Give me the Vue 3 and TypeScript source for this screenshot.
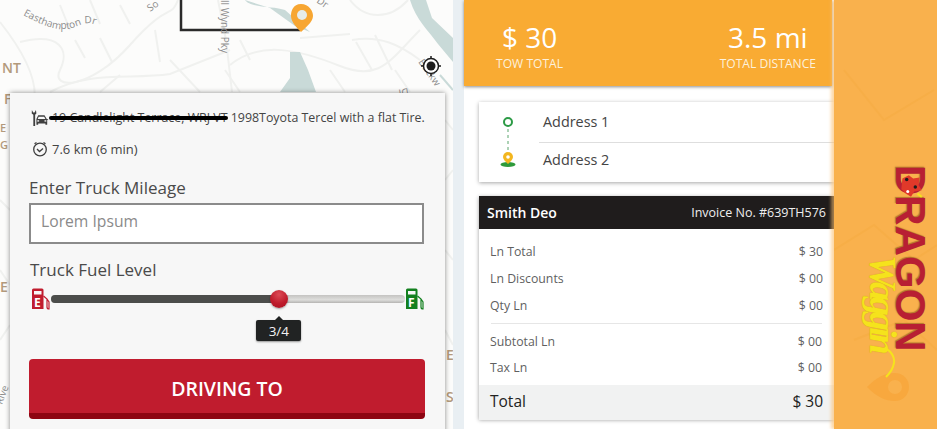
<template>
  <div class="screen">
    <section class="map-pane">
      <svg class="map-bg" width="453" height="429" viewBox="0 0 453 429">
        <defs>
          <path id="easthampton" d="M23 15 C40 24 60 34 75 27 S95 24 105 30" />
        </defs>
        <g fill="none" stroke="#f0f1ef" stroke-width="2">
          <path d="M0 22 C30 60 40 90 32 110" />
          <path d="M20 42 C60 32 70 50 60 70 S90 90 130 45 S170 20 178 0" />
          <path d="M50 92 C90 70 130 80 170 74 L230 50" />
          <path d="M155 30 L160 62 M75 40 L85 58 M100 38 L112 62 M60 5 L70 30 M90 0 L100 24 M120 5 L130 24" />
          <path d="M218 0 L226 40 L232 92" />
          <path d="M230 65 C260 40 300 50 340 66 S390 60 420 30" />
          <path d="M352 40 C380 35 400 45 420 60 M356 42 L372 70 M375 35 L392 70 M300 38 L350 34 M240 40 L250 60" />
          <path d="M330 70 L345 92 M395 70 L410 92 M225 70 L240 92 M170 60 L200 92 M120 75 L100 92" />
          <path d="M350 0 C365 20 390 20 408 0" />
          <path d="M445 120 L453 130 M445 250 L453 260 M0 270 L10 285" />
          <path d="M0 340 L10 325 M445 330 L453 345 M445 180 L453 170 M0 200 L10 210" />
        </g>
        <path d="M245 0 C250 8 275 6 285 10 L310 32 L295 26 L270 8 Z" fill="#c9dad8" />
        <path d="M290 52 L300 52 L308 70 L316 92 L280 92 L290 78 Z" fill="#c9dad8" />
        <path d="M410 0 C416 20 428 30 438 44 L453 62 L453 38 L432 18 L426 0 Z" fill="#c9dad8" />
        <path d="M440 75 L453 90" stroke="#c9dad8" stroke-width="2" />
        <path d="M181 0 V30 H300" fill="none" stroke="#2a2a2a" stroke-width="2.5" />
        <path d="M301 4 C293 4 291 11 291 16 C291 22 297 28 301 32 C305 28 313 22 313 16 C313 11 309 4 301 4 Z" fill="#f7a632" />
        <circle cx="302" cy="15" r="5" fill="#e6eceb" />
        <g font-family="'Open Sans', sans-serif" fill="#8c8c8c" font-size="10">
          <text><textPath href="#easthampton">Easthampton Dr</textPath></text>
          <text transform="translate(150 12) rotate(-35)">So</text>
          <text transform="translate(221 0) rotate(90)">ll Wynd Pky</text>
          <text transform="translate(316 2) rotate(35)">Dr</text>
          <text transform="translate(418 62) rotate(55)">Buckw</text>
          <text transform="translate(408 88) rotate(170)">Dr</text>
          <text transform="translate(2 405) rotate(-70)">Rive</text>
        </g>
        <g font-family="'Open Sans', sans-serif" font-weight="600" fill="#b39a7c" font-size="14">
          <text x="2" y="73">NT</text>
          <text x="4" y="104">F</text>
          <text x="0" y="292">E</text>
          <text x="446" y="360">E</text>
          <text x="446" y="402">S</text>
        </g>
        <g font-family="'Open Sans', sans-serif" font-weight="600" fill="#b39a7c" font-size="11">
          <text x="0" y="132">E</text>
          <text x="0" y="149">G</text>
        </g>
      </svg>
      <svg class="locate" width="22" height="22" viewBox="0 0 22 22">
        <circle cx="11" cy="11" r="7.5" fill="#fff" stroke="#1d1d1d" stroke-width="1.5" />
        <circle cx="11" cy="11" r="4.5" fill="#1d1d1d" />
        <path d="M11 1 V4 M11 18 V21 M1 11 H4 M18 11 H21" stroke="#1d1d1d" stroke-width="1.5" />
      </svg>

      <div class="panel">
        <div class="info-row">
          <svg class="truck-icon" width="18" height="18" viewBox="0 0 20 20" fill="#3f3f3f">
            <path d="M1 1 L2.5 4 L4 4 L5.5 1 L6 5 L4.6 6.5 V19 H2.6 V6.5 L0.8 5 Z" />
            <path d="M8 7 H15 L17.5 11 H19 V12 H18 V17.5 H16 V16 H8 V17.5 H6 V11 L8 7 Z M8.5 8.5 L7.5 11 H16 L14.6 8.5 Z" fill-rule="evenodd" />
            <rect x="7" y="12.5" width="2" height="1.5" fill="#f7f7f7" />
            <rect x="15" y="12.5" width="2" height="1.5" fill="#f7f7f7" />
          </svg>
          <p class="info-text small"><span class="scribbled">19 Candlelight Terrace, WRJ VT</span> 1998Toyota Tercel with a flat Tire.</p>
        </div>
        <div class="info-row second">
          <svg class="clock-icon" width="16" height="16" viewBox="0 0 16 16" fill="none" stroke="#3f3f3f" stroke-width="1.3">
            <circle cx="8" cy="8.5" r="6.3" />
            <path d="M5 8 L7.5 10.5 L11 7.5" />
            <path d="M2.5 2.8 L4.5 1.5 M13.5 2.8 L11.5 1.5" />
          </svg>
          <p class="info-text">7.6 km (6 min)</p>
        </div>

        <label class="field-label">Enter Truck Mileage</label>
        <div class="text-input">Lorem Ipsum</div>

        <div class="field-label fuel-label">Truck Fuel Level</div>
        <div class="fuel">
          <svg class="gauge" width="20" height="22" viewBox="0 0 20 22">
            <path d="M1 2 Q1 0.5 2.5 0.5 H11 Q12.5 0.5 12.5 2 V21 H1 Z" fill="#c01c2e" />
            <rect x="3" y="3" width="7.5" height="3.5" fill="#f7f7f7" />
            <text x="3" y="18.5" class="gauge-letter">E</text>
            <path d="M12.5 8 L16 11 V19 Q16 21 18 21 V14 L16 11" fill="none" stroke="#c01c2e" stroke-width="1.2" />
          </svg>
          <div class="track">
            <div class="track-fill" :style="{ width: fuelPercent + '%' }"></div>
            <div class="thumb" :style="{ left: fuelPercent + '%' }">
              <div class="fuel-tip">3/4</div>
            </div>
          </div>
          <svg class="gauge" width="20" height="22" viewBox="0 0 20 22">
            <path d="M1 2 Q1 0.5 2.5 0.5 H11 Q12.5 0.5 12.5 2 V21 H1 Z" fill="#13801f" />
            <rect x="3" y="3" width="7.5" height="3.5" fill="#f7f7f7" />
            <text x="3" y="18.5" class="gauge-letter">F</text>
            <path d="M12.5 8 L16 11 V19 Q16 21 18 21 V14 L16 11" fill="none" stroke="#13801f" stroke-width="1.2" />
          </svg>
        </div>

        <button class="drive-btn">DRIVING TO</button>
      </div>
    </section>

    <main class="summary">
      <header class="totals">
        <div class="total-block">
          <div class="total-value">$ 30</div>
          <div class="total-label">TOW TOTAL</div>
        </div>
        <div class="total-block">
          <div class="total-value">3.5 mi</div>
          <div class="total-label">TOTAL DISTANCE</div>
        </div>
      </header>

      <div class="address-card">
        <div class="route-icons">
          <svg width="30" height="60" viewBox="0 0 30 60">
            <circle cx="15" cy="7" r="4" fill="none" stroke="#2b9a45" stroke-width="2" />
            <path d="M15 14 V36" stroke="#5aa56d" stroke-width="1" stroke-dasharray="3 3" />
            <ellipse cx="15" cy="49.5" rx="7.5" ry="2.4" fill="#2f9a3b" />
            <path d="M15 49 C12 46 10 44 10 42 A5 5 0 0 1 20 42 C20 44 18 46 15 49 Z" fill="#f3b61f" />
            <circle cx="15" cy="42" r="1.8" fill="#fff" />
          </svg>
        </div>
        <div class="address-list">
          <div class="address">Address 1</div>
          <div class="address">Address 2</div>
        </div>
      </div>

      <div class="invoice">
        <div class="invoice-head">
          <span class="client">Smith Deo</span>
          <span class="invoice-no">Invoice No. #639TH576</span>
        </div>
        <div class="lines first">
          <div v-for="l in topLines" :key="l.name" class="line">
            <span>{{ l.name }}</span><span>{{ l.value }}</span>
          </div>
        </div>
        <div class="lines second">
          <div v-for="l in subLines" :key="l.name" class="line">
            <span>{{ l.name }}</span><span>{{ l.value }}</span>
          </div>
        </div>
        <div class="grand">
          <span>Total</span><span>$ 30</span>
        </div>
      </div>
    </main>

    <aside class="brand">
      <svg class="brand-bg" width="103" height="429" viewBox="0 0 103 429" fill="none">
        <g stroke="#f7ae47" stroke-width="2">
          <path d="M0 250 L40 225 L80 260 L103 245" />
          <path d="M10 70 L50 120 L100 90" />
          <path d="M20 340 L70 320 L103 350" />
        </g>
        <path d="M33 387 C43 377 51 373 61 373 A14 14 0 0 1 61 401 C51 401 43 397 33 387 Z" fill="#f8a83e" />
        <circle cx="61" cy="387" r="7" fill="#f9b14d" />
      </svg>
      <div class="logo">
        <span class="logo-main">DRAGON</span>
        <span class="logo-script">Waggin</span>
        <svg class="logo-tail" width="20" height="34" viewBox="0 0 20 34" fill="none">
          <path d="M4 0 C10 3 14 9 13 15 C12 21 9 25 5 29" stroke="#f5e31c" stroke-width="2" />
        </svg>
        <svg class="logo-crest" width="26" height="28" viewBox="0 0 24 26">
          <path d="M4 6 L10 3 L14 6 L20 5 L19 12 L22 17 L15 18 L12 23 L7 20 L3 16 Z" fill="#e0392a" />
          <circle cx="8" cy="7" r="1.6" fill="#1d1d1d" />
          <circle cx="16" cy="14" r="1.6" fill="#1d1d1d" />
          <circle cx="9" cy="18" r="1.4" fill="#fff" />
          <path d="M18 20 L22 23" stroke="#f5e31c" stroke-width="2" />
        </svg>
      </div>
    </aside>
  </div>
</template>

<script setup lang="ts">
interface InvoiceLine {
  name: string
  value: string
}

const fuelPercent = 64.5

const topLines: InvoiceLine[] = [
  { name: 'Ln Total', value: '$ 30' },
  { name: 'Ln Discounts', value: '$ 00' },
  { name: 'Qty Ln', value: '$ 00' },
]

const subLines: InvoiceLine[] = [
  { name: 'Subtotal Ln', value: '$ 00' },
  { name: 'Tax Ln', value: '$ 00' },
]
</script>

<style>
html,
body {
  margin: 0;
  overflow: hidden;
}
</style>

<style scoped>
.screen {
  display: flex;
  width: 937px;
  height: 429px;
  overflow: hidden;
  font-family: 'Open Sans', sans-serif;
  color: #454545;
  background: #e9eff3;
}

.map-pane {
  position: relative;
  flex: none;
  width: 453px;
  height: 429px;
  margin-right: 11px;
  background: #fcfcfb;
  overflow: hidden;
}

.map-bg {
  position: absolute;
  top: 0;
  left: 0;
}

.locate {
  position: absolute;
  top: 55px;
  left: 420px;
}

.panel {
  position: absolute;
  top: 93px;
  left: 10px;
  width: 435px;
  height: 360px;
  box-sizing: border-box;
  padding: 14px 20px 0 19px;
  background: #f7f7f7;
  box-shadow: 0 0 5px rgba(0, 0, 0, 0.45);
}

.info-row {
  display: flex;
  align-items: center;
  gap: 3px;
  height: 22px;
  padding-left: 2px;
}

.truck-icon,
.clock-icon,
.gauge {
  flex: none;
}

.info-row.second {
  gap: 4px;
  margin-top: 9px;
  padding-left: 3px;
}

.info-text {
  margin: 0;
  font-size: 13px;
  line-height: 22px;
  white-space: nowrap;
  color: #444;
}

.info-text.small {
  font-size: 12.4px;
}

.scribbled {
  position: relative;
}

.scribbled::after {
  content: '';
  position: absolute;
  left: -3px;
  right: 0;
  top: 7px;
  height: 4px;
  background: #000;
  border-radius: 2px;
}

.field-label {
  display: block;
  margin-top: 17px;
  font-size: 17px;
  line-height: 22px;
  color: #4a4a4a;
}

.text-input {
  box-sizing: border-box;
  width: 395px;
  height: 41px;
  margin-top: 4px;
  padding: 0 10px;
  border: 2px solid #8b8b8b;
  background: #fff;
  font-size: 15.7px;
  line-height: 33px;
  color: #8a8a8a;
}

.fuel-label {
  margin-top: 15px;
  margin-left: 1px;
}

.fuel {
  display: flex;
  align-items: center;
  height: 22px;
  margin-top: 7px;
  width: 396px;
  padding-left: 2px;
  box-sizing: border-box;
}

.gauge-letter {
  font-family: 'Open Sans', sans-serif;
  font-size: 12px;
  font-weight: 700;
  fill: #fff;
}

.track {
  position: relative;
  flex: 1;
  height: 8px;
  border-radius: 4px;
  background: linear-gradient(#c4c3c1, #dededc 60%, #b5b4b2);
}

.track-fill {
  height: 100%;
  border-radius: 4px 0 0 4px;
  background: #4c4d4b;
}

.thumb {
  position: absolute;
  top: 50%;
  width: 18px;
  height: 18px;
  margin: -9px 0 0 -9px;
  border-radius: 50%;
  background: radial-gradient(circle at 50% 25%, #dc4a55, #bf1c2c 55%, #a9101f);
  box-shadow: 0 1px 2px rgba(0, 0, 0, 0.35);
}

.fuel-tip {
  position: absolute;
  top: 30px;
  left: 50%;
  width: 45px;
  height: 21px;
  margin-left: -23px;
  border-radius: 2px;
  background: #212323;
  color: #f1f1f1;
  font-size: 13.5px;
  line-height: 22px;
  text-align: center;
  box-shadow: 0 1px 2px rgba(0, 0, 0, 0.4);
}

.fuel-tip::before {
  content: '';
  position: absolute;
  top: -4px;
  left: 50%;
  margin-left: -4px;
  border: 4px solid transparent;
  border-top: 0;
  border-bottom-color: #212323;
}

.drive-btn {
  display: block;
  width: 396px;
  height: 60px;
  margin-top: 49px;
  padding: 5px 0 0;
  border: none;
  border-bottom: 6px solid #8e0512;
  border-radius: 4px;
  background: #c01c2e;
  color: #fff;
  font-family: inherit;
  font-size: 19.5px;
  font-weight: 600;
}

.summary {
  flex: none;
  width: 370px;
  height: 429px;
  background: #fff;
  position: relative;
  z-index: 1;
}

.totals {
  display: flex;
  justify-content: space-between;
  box-sizing: border-box;
  width: 368px;
  height: 86px;
  padding: 21px 16px 0 32px;
  background: #f9ab33;
  color: #fff;
  box-shadow: 0 1px 3px rgba(0, 0, 0, 0.45);
}

.total-block {
  text-align: center;
}

.total-value {
  font-size: 28px;
  line-height: 32px;
}

.total-label {
  margin-top: 3px;
  font-size: 12.1px;
  line-height: 16px;
  color: #fdf1dc;
}

.address-card {
  display: flex;
  width: 355px;
  height: 80px;
  margin: 16px 0 0 15px;
  background: #fff;
  box-shadow: 0 1px 4px rgba(0, 0, 0, 0.35);
}

.route-icons {
  flex: none;
  width: 60px;
  padding: 13px 0 0 14px;
  box-sizing: border-box;
}

.address-list {
  flex: 1;
}

.address {
  height: 40px;
  padding-left: 4px;
  font-size: 14.4px;
  line-height: 39px;
  color: #444;
}

.address:first-child {
  border-bottom: 1px solid #dedede;
}

.address:last-child {
  line-height: 33px;
}

.invoice {
  width: 355px;
  height: 223px;
  margin: 14px 0 0 15px;
  background: #fff;
  box-shadow: 0 1px 4px rgba(0, 0, 0, 0.4);
}

.invoice-head {
  display: flex;
  justify-content: space-between;
  align-items: center;
  height: 33px;
  padding: 0 8px;
  background: #1f1c1c;
  color: #fff;
}

.client {
  font-size: 14px;
  font-weight: 600;
}

.invoice-no {
  font-size: 12.5px;
  color: #eee;
}

.lines {
  padding: 0 11px;
  font-size: 12.3px;
  color: #5f5f5f;
}

.lines.first {
  padding-top: 9px;
  padding-bottom: 4px;
}

.lines.second {
  margin: 0 12px;
  padding: 5px 0 0;
  border-top: 1px solid #e6e6e6;
  text-indent: -1px;
}

.line {
  display: flex;
  justify-content: space-between;
  height: 27px;
  line-height: 27px;
}

.lines.second .line {
  height: 26px;
  line-height: 26px;
}

.grand {
  display: flex;
  justify-content: space-between;
  align-items: center;
  box-sizing: border-box;
  height: 35px;
  margin-top: 4px;
  padding: 0 11px 3px;
  background: #f1f2f2;
  color: #222;
  font-size: 15.5px;
  font-weight: 500;
}

.brand {
  position: relative;
  z-index: 2;
  flex: none;
  width: 103px;
  height: 429px;
  background: #f9b14d;
  box-shadow: -3px 0 3px rgba(250, 190, 110, 0.6);
}

.brand-bg {
  position: absolute;
  top: 0;
  left: 0;
}

.logo {
  position: absolute;
  top: 165px;
  left: 58px;
}

.logo-main {
  display: block;
  writing-mode: vertical-rl;
  font-family: 'Liberation Sans', sans-serif;
  font-size: 42px;
  font-weight: 700;
  line-height: 36px;
  color: #b81f33;
  text-shadow: -1px 1px 1px rgba(110, 60, 10, 0.5);
}

.logo-script {
  position: absolute;
  top: 90px;
  left: -27px;
  writing-mode: vertical-rl;
  font-family: 'Liberation Serif', serif;
  font-size: 38px;
  font-style: italic;
  font-weight: 700;
  line-height: 36px;
  letter-spacing: -4px;
  color: #f5e31c;
  text-shadow: 0 0 1px #c89a10;
}

.logo-tail {
  position: absolute;
  top: 183px;
  left: -11px;
}

.logo-crest {
  position: absolute;
  top: 7px;
  left: 6px;
}
</style>
